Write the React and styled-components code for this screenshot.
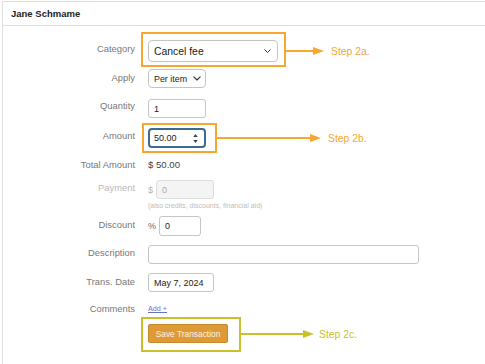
import React from 'react';
import styled, { createGlobalStyle } from 'styled-components';

const GlobalStyle = createGlobalStyle`
  html, body {
    margin: 0;
    padding: 0;
    background: #fff;
  }
  body {
    font-family: "Liberation Sans", Arial, sans-serif;
    width: 485px;
    height: 364px;
    overflow: hidden;
  }
`;

const ORANGE = '#f7a630';
const OLIVE = '#c9c02a';

const Panel = styled.div`
  box-sizing: border-box;
  margin: 1px 0 0 2px;
  width: 483px;
  height: 363px;
  border-left: 1px solid #dedede;
  border-top: 1px solid #dedede;
`;

const Header = styled.div`
  height: 23px;
  display: flex;
  align-items: center;
  padding-left: 8px;
  font-size: 9.5px;
  font-weight: bold;
  color: #222;
  border-bottom: 1px solid #dedede;
`;

const Form = styled.div`
  display: flex;
  flex-direction: column;
  padding-top: 14px;
`;

const Row = styled.div`
  display: flex;
  align-items: flex-start;
  margin-top: ${p => p.$mt || 0}px;
`;

const Label = styled.div`
  width: 132px;
  flex: none;
  text-align: right;
  font-size: 9.4px;
  line-height: ${p => p.$h}px;
  color: ${p => (p.$muted ? '#b8b8b8' : '#777')};
`;

const Field = styled.div`
  margin-left: 13px;
  display: flex;
  flex-direction: column;
`;

const Line = styled.div`
  display: flex;
  align-items: center;
`;

const SelectBox = styled.div`
  box-sizing: border-box;
  width: ${p => p.$w}px;
  height: ${p => p.$h}px;
  display: flex;
  align-items: center;
  justify-content: space-between;
  padding: 0 ${p => p.$pr}px 0 5px;
  border: 1px solid #c4c4c4;
  border-radius: 4px;
  background: #fff;
  font-size: ${p => p.$fs}px;
  color: #222;
`;

const TextBox = styled.input`
  box-sizing: border-box;
  width: ${p => p.$w}px;
  height: ${p => p.$h || 19}px;
  margin: 0;
  padding: 0 0 0 5px;
  border: 1px solid ${p => (p.disabled ? '#dcdcdc' : '#c6c6c6')};
  border-radius: 3px;
  background: ${p => (p.disabled ? '#f4f4f4' : '#fff')};
  font-family: inherit;
  font-size: 9px;
  color: ${p => (p.disabled ? '#aaa' : '#222')};
  outline: none;
`;

const FocusBox = styled.div`
  box-sizing: border-box;
  width: 58px;
  height: 20px;
  display: flex;
  align-items: center;
  justify-content: space-between;
  padding: 0 6px 0 4px;
  border: 2px solid #3b6a94;
  border-radius: 4px;
  font-size: 9px;
  color: #222;
`;

const Spinner = styled.div`
  display: flex;
  flex-direction: column;
  gap: 3px;
`;

const Prefix = styled.span`
  font-size: 9px;
  color: ${p => (p.$muted ? '#b5b5b5' : '#666')};
  margin-right: 3px;
`;

const Value = styled.div`
  font-size: 9.6px;
  line-height: 14px;
  color: #444;
`;

const Hint = styled.div`
  margin-top: 3px;
  font-size: 7px;
  color: #bdbdbd;
  line-height: 8px;
`;

const AddLink = styled.a`
  font-size: 7.2px;
  line-height: 10px;
  color: #6f6fc4;
  text-decoration: underline;
`;

const SaveButton = styled.button`
  box-sizing: border-box;
  width: 80px;
  height: 19px;
  margin: 0;
  padding: 0;
  border: 1px solid #c98a2a;
  border-radius: 2px;
  background: #dd9b36;
  color: #fff0ee;
  font-family: inherit;
  font-size: 8.4px;
`;

const Marked = styled.div`
  position: relative;
  display: inline-flex;
  align-self: flex-start;
`;

const Frame = styled.div`
  position: absolute;
  top: ${p => -p.$t}px;
  left: ${p => -p.$l}px;
  right: ${p => -p.$r}px;
  bottom: ${p => -p.$b}px;
  border: 2px solid ${p => p.$color};
  pointer-events: none;
`;

const Callout = styled.div`
  position: absolute;
  left: calc(100% + ${p => p.$r}px);
  top: 50%;
  transform: translateY(-50%);
  display: flex;
  align-items: center;
  gap: ${p => p.$gap}px;
  color: ${p => p.$color};
  font-size: 10.4px;
  white-space: nowrap;
`;

const Chevron = ({ size = 7 }) => (
  <svg width={size} height={size * 0.6} viewBox="0 0 10 6">
    <path d="M1 1 L5 5 L9 1" fill="none" stroke="#333" strokeWidth="1.4" strokeLinecap="round" strokeLinejoin="round" />
  </svg>
);

const Tri = ({ up }) => (
  <svg width="5" height="3" viewBox="0 0 6 4">
    <path d={up ? 'M0 4 L3 0 L6 4 Z' : 'M0 0 L3 4 L6 0 Z'} fill="#444" />
  </svg>
);

const Arrow = ({ length, color }) => (
  <svg width={length} height="9" viewBox={`0 0 ${length} 9`}>
    <line x1="0" y1="4.5" x2={length - 8} y2="4.5" stroke={color} strokeWidth="2" />
    <path d={`M${length - 11} 0.5 L${length} 4.5 L${length - 11} 8.5 Z`} fill={color} />
  </svg>
);

const Annotated = ({ color, inset, reach, arrow, gap, step, children }) => (
  <Marked>
    {children}
    <Frame $color={color} $t={inset[0]} $r={inset[1]} $b={inset[2]} $l={inset[3]} />
    <Callout $color={color} $r={reach} $gap={gap}>
      <Arrow length={arrow} color={color} />
      <span>{step}</span>
    </Callout>
  </Marked>
);

export default function App() {
  return (
    <>
      <GlobalStyle />
      <Panel>
        <Header>Jane Schmame</Header>
        <Form>
          <Row>
            <Label $h={17}>Category</Label>
            <Field>
              <Annotated color={ORANGE} inset={[8, 8, 5, 7]} reach={8} arrow={38} gap={7} step="Step 2a.">
                <SelectBox $w={130} $h={22} $fs={10.4} $pr={6}>
                  <span>Cancel fee</span>
                  <Chevron size={7} />
                </SelectBox>
              </Annotated>
            </Field>
          </Row>

          <Row $mt={7}>
            <Label $h={18}>Apply</Label>
            <Field>
              <SelectBox $w={58} $h={19} $fs={8.9} $pr={4}>
                <span>Per item</span>
                <Chevron size={8} />
              </SelectBox>
            </Field>
          </Row>

          <Row $mt={11}>
            <Label $h={13}>Quantity</Label>
            <Field>
              <TextBox $w={58} defaultValue="1" readOnly />
            </Field>
          </Row>

          <Row $mt={10}>
            <Label $h={15}>Amount</Label>
            <Field>
              <Annotated color={ORANGE} inset={[5, 11, 5, 6]} reach={11} arrow={104} gap={7} step="Step 2b.">
                <FocusBox>
                  <span>50.00</span>
                  <Spinner>
                    <Tri up />
                    <Tri />
                  </Spinner>
                </FocusBox>
              </Annotated>
            </Field>
          </Row>

          <Row $mt={10}>
            <Label $h={14}>Total Amount</Label>
            <Field>
              <Value>$ 50.00</Value>
            </Field>
          </Row>

          <Row $mt={8}>
            <Label $h={16} $muted>Payment</Label>
            <Field>
              <Line>
                <Prefix $muted>$</Prefix>
                <TextBox $w={58} defaultValue="0" disabled />
              </Line>
              <Hint>(also credits, discounts, financial aid)</Hint>
            </Field>
          </Row>

          <Row $mt={6}>
            <Label $h={18}>Discount</Label>
            <Field>
              <Line>
                <Prefix>%</Prefix>
                <TextBox $w={42} $h={20} defaultValue="0" readOnly />
              </Line>
            </Field>
          </Row>

          <Row $mt={9}>
            <Label $h={16}>Description</Label>
            <Field>
              <TextBox $w={271} defaultValue="" readOnly />
            </Field>
          </Row>

          <Row $mt={9}>
            <Label $h={18}>Trans. Date</Label>
            <Field>
              <TextBox $w={66} defaultValue="May 7, 2024" readOnly />
            </Field>
          </Row>

          <Row $mt={12}>
            <Label $h={10}>Comments</Label>
            <Field>
              <AddLink href="#comments">Add +</AddLink>
            </Field>
          </Row>

          <Row $mt={10}>
            <Label $h={19} />
            <Field>
              <Annotated color={OLIVE} inset={[7, 13, 9, 7]} reach={13} arrow={73} gap={5} step="Step 2c.">
                <SaveButton>Save Transaction</SaveButton>
              </Annotated>
            </Field>
          </Row>
        </Form>
      </Panel>
    </>
  );
}
